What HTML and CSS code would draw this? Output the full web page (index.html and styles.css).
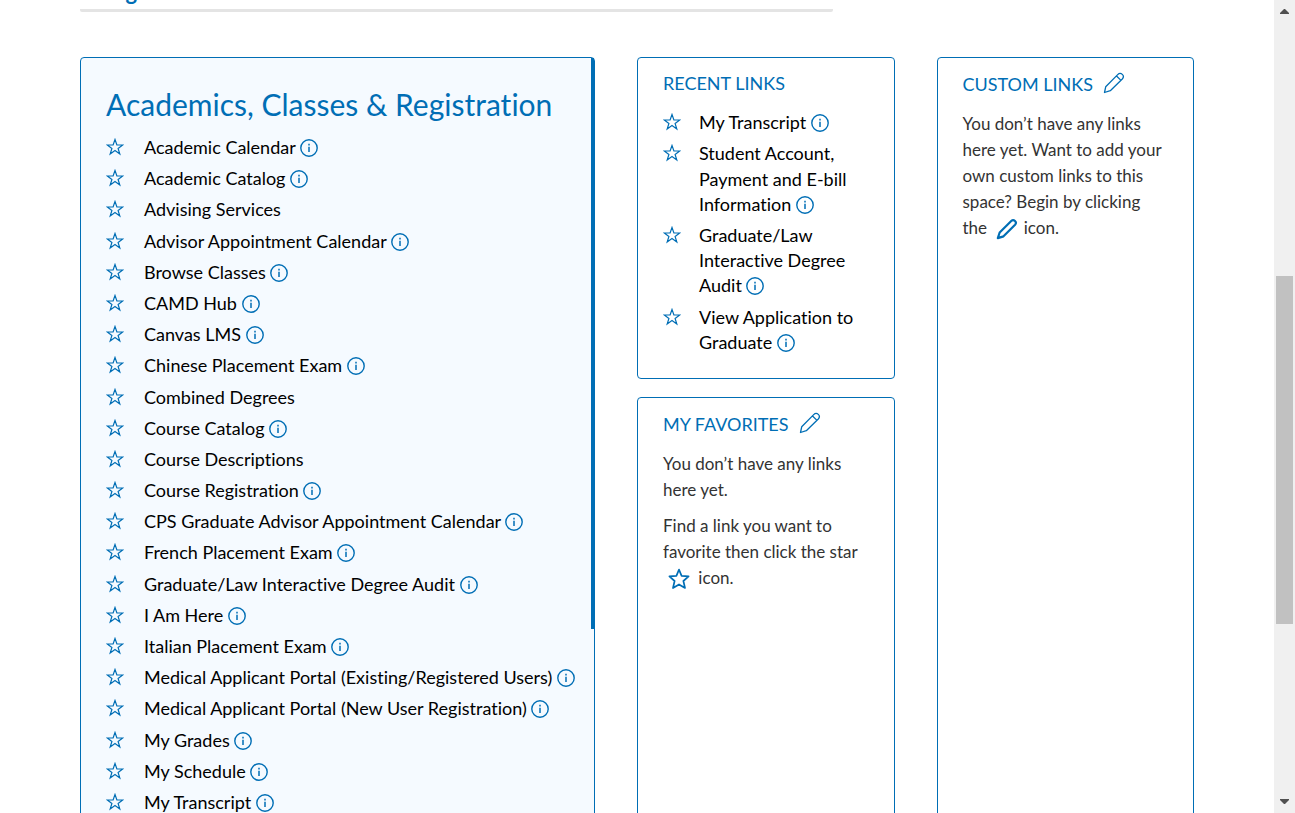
FILE: index.html
```html
<!DOCTYPE html>
<html lang="en">
<head>
<meta charset="utf-8">
<title>Resources</title>
<link rel="stylesheet" href="styles.css">
</head>
<body>
<svg class="sprite" aria-hidden="true">
  <symbol id="star" viewBox="0 0 18 18"><path d="M9 1.500 10.900 7H16.700L12.100 10.400 13.800 16 9 12.600 4.200 16 5.900 10.400 1.300 7H7.100Z" fill="none" stroke="currentColor" stroke-width="1.200"/></symbol>
  <symbol id="info" viewBox="0 0 18 18"><circle cx="9" cy="9" r="8.200" fill="none" stroke="currentColor" stroke-width="1.400"/><path d="M9 4.800V6.400M9 7.800V13" fill="none" stroke="currentColor" stroke-width="1.500"/></symbol>
  <symbol id="pencil" viewBox="0 0 22 22"><path d="M1.500 20.500 2.700 14.800 14.700 2.600C17.800-.5 22.300 3.600 19.300 7L7.300 18.700ZM13.500 4 18 8.400" fill="none" stroke="currentColor" stroke-width="1.300" stroke-linejoin="round"/></symbol>
  <symbol id="pencil-bold" viewBox="0 0 24 24"><path d="M2 22 4 15.800 16.600 3.200C19.400.6 23.400 4.500 20.800 7.400L8.200 20Z" fill="none" stroke="currentColor" stroke-width="2.400" stroke-linejoin="round"/></symbol>
  <symbol id="star-bold" viewBox="0 0 22 22"><path d="M11 1.600 13.600 7.800 20.600 8.400 15.400 13 17 20 11 16.400 5 20 6.600 13 1.400 8.400 8.400 7.800Z" fill="none" stroke="currentColor" stroke-width="1.700" stroke-linejoin="round"/></symbol>
</svg>
<div class="window">
  <div class="page">
    <nav class="tabs"><a class="tab" href="#">Categories</a></nav>
    <main class="columns">
      <section class="card category">
        <h2 class="category-title">Academics, Classes &amp; Registration</h2>
        <ul class="links" id="academics"></ul>
      </section>
      <div class="stack">
        <section class="card recent">
          <h3 class="card-title">RECENT LINKS</h3>
          <ul class="links" id="recent"></ul>
        </section>
        <section class="card grow">
          <h3 class="card-title">MY FAVORITES <button class="icon-button" aria-label="Edit favorites"><svg class="pencil"><use href="#pencil"/></svg></button></h3>
          <p class="note">You don’t have any links here yet.</p>
          <p class="note">Find a link you want to favorite then click the star <svg class="inline-icon star-inline"><use href="#star-bold"/></svg> icon.</p>
        </section>
      </div>
      <section class="card">
        <h3 class="card-title">CUSTOM LINKS <button class="icon-button" aria-label="Edit custom links"><svg class="pencil"><use href="#pencil"/></svg></button></h3>
        <p class="note">You don’t have any links here yet. Want to add your own custom links to this space? Begin by clicking the <svg class="inline-icon"><use href="#pencil-bold"/></svg> icon.</p>
      </section>
    </main>
  </div>
  <div class="scrollbar" aria-hidden="true">
    <svg class="arrow" viewBox="0 0 9 5"><path d="M4 0h1l4 4v1H0V4Z"/></svg>
    <div class="track"><div class="thumb"></div></div>
    <svg class="arrow" viewBox="0 0 9 5"><path d="M0 0h9v1L5 5H4L0 1Z"/></svg>
  </div>
</div>
<script src="links.js"></script>
</body>
</html>
```
FILE: links.js
```js
// Each entry: link name, whether it has an info button.
const academics = [
  ["Academic Calendar", true], ["Academic Catalog", true], ["Advising Services", false],
  ["Advisor Appointment Calendar", true], ["Browse Classes", true], ["CAMD Hub", true],
  ["Canvas LMS", true], ["Chinese Placement Exam", true], ["Combined Degrees", false],
  ["Course Catalog", true], ["Course Descriptions", false], ["Course Registration", true],
  ["CPS Graduate Advisor Appointment Calendar", true], ["French Placement Exam", true],
  ["Graduate/Law Interactive Degree Audit", true], ["I Am Here", true],
  ["Italian Placement Exam", true], ["Medical Applicant Portal (Existing/Registered Users)", true],
  ["Medical Applicant Portal (New User Registration)", true], ["My Grades", true],
  ["My Schedule", true], ["My Transcript", true]
];
const recent = [
  ["My Transcript", true], ["Student Account, Payment and E-bill Information", true],
  ["Graduate/Law Interactive Degree Audit", true], ["View Application to Graduate", true]
];
function fill(id, items) {
  document.getElementById(id).innerHTML = items.map(([name, info]) =>
    `<li class="item"><button class="icon-button" aria-label="Favorite ${name}"><svg class="star"><use href="#star"/></svg></button>` +
    `<span><a class="link" href="#">${name}</a>` +
    (info ? ` <button class="icon-button" aria-label="About ${name}"><svg class="info"><use href="#info"/></svg></button>` : "") +
    `</span></li>`).join("");
}
fill("academics", academics);
fill("recent", recent);
```
FILE: styles.css
```css
* { box-sizing: border-box; }
body { margin: 0; background: #fff; color: #333; font-family: Lato, "Open Sans", sans-serif; font-size: 18px; line-height: 1.4; font-variant-ligatures: none; }
h2, h3, p, ul { margin: 0; padding: 0; font-weight: 400; }
.sprite { display: none; }
.window { display: flex; height: 100vh; overflow: hidden; }
.page { flex: 1; display: flex; flex-direction: column; min-width: 0; padding: 0 80px; }
.tabs { display: flex; align-items: flex-end; width: 753px; max-width: 100%; height: 12px; padding-bottom: 5px; border-bottom: 3px solid #e4e4e4; border-radius: 2px; }
.tab { color: #006eb5; font-size: 22px; font-weight: 700; text-decoration: none; line-height: 24px; }
.columns { flex: 1; display: grid; grid-template-columns: 2fr 1fr 1fr; gap: 42px; margin-top: 45px; min-height: 0; }
.card { padding: 14px 25px; border: 1px solid #006eb5; border-radius: 4px; }
.category, .stack, .columns > .card { min-width: 0; margin-bottom: -400px; }
.category { position: relative; padding: 25px 12px 25px 25px; background: #f5faff; }
.category::after { content: ""; position: absolute; top: 0; right: 0; width: 3px; height: 571px; background: #006eb5; }
.category-title { margin-bottom: 10px; color: #006eb5; font-size: 30px; }
.stack { display: flex; flex-direction: column; gap: 18px; }
.grow { flex: 1; }
.recent { padding-top: 13px; padding-bottom: 23px; }
.card-title { display: flex; align-items: flex-start; gap: 10px; margin-bottom: 14px; color: #006eb5; font-size: 18px; }
.links { display: flex; flex-direction: column; gap: 6px; list-style: none; }
.item { display: grid; grid-template-columns: 18px 1fr; column-gap: 18px; align-items: start; }
.category .item { column-gap: 20px; }
.link { color: #000; text-decoration: none; }
.icon-button { padding: 0; border: 0; background: none; color: #006eb5; font: inherit; line-height: 1; }
.star, .info { display: inline-block; width: 18px; height: 18px; }
.star { vertical-align: -5px; }
.info { vertical-align: -3px; }
.pencil { display: block; width: 22px; height: 22px; }
.note { margin-bottom: 10px; font-size: 17px; line-height: 26px; }
.inline-icon { width: 24px; height: 22px; margin-left: 4px; vertical-align: -6px; color: #006eb5; }
.star-inline { margin-right: 3px; }
.scrollbar { display: flex; flex-direction: column; align-items: center; width: 21px; padding: 9px 2px; background: #f0f0f0; }
.arrow { width: 9px; height: 5px; fill: #505050; }
.track { flex: 1; align-self: stretch; padding-top: 262px; }
.thumb { height: 348px; background: #c1c1c1; }
```
